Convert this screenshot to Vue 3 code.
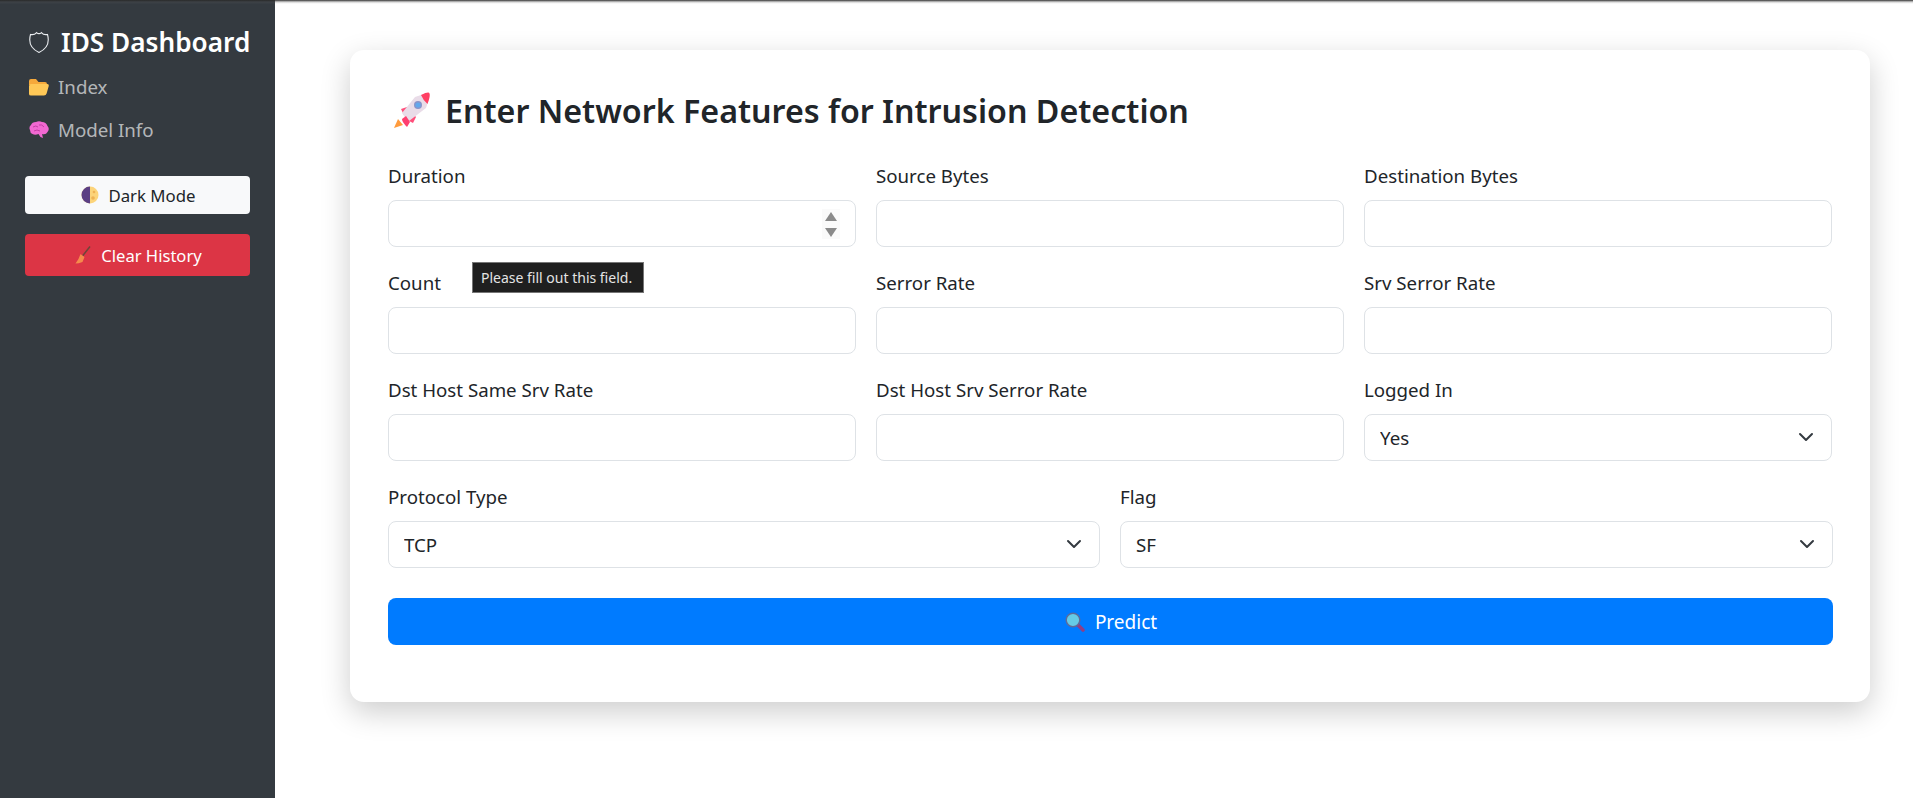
<script setup>
const triple = [
  [{ label: 'Duration', spin: true }, { label: 'Source Bytes' }, { label: 'Destination Bytes' }],
  [{ label: 'Count' }, { label: 'Serror Rate' }, { label: 'Srv Serror Rate' }],
  [{ label: 'Dst Host Same Srv Rate' }, { label: 'Dst Host Srv Serror Rate' }, { label: 'Logged In', select: ['Yes', 'No'] }]
]
const pair = [
  { label: 'Protocol Type', select: ['TCP', 'UDP', 'ICMP'] },
  { label: 'Flag', select: ['SF', 'S0', 'REJ'] }
]
</script>

<template>
  <div class="page">
    <aside class="sidebar">
      <h4 class="brand">
        <svg class="shield" viewBox="0 0 22 24" width="22" height="24"><path d="M2.5 4.5 C5 5 7 4.5 8.6 2.6 C10 4 12 4 13.4 2.6 C15 4.5 17 5 19.5 4.5 C21 10 20.8 18 11 22.4 C1.2 18 1 10 2.5 4.5 Z" fill="none" stroke="#e9ecef" stroke-width="1.1"/></svg>
        <span>IDS Dashboard</span>
      </h4>
      <a class="nav-link">
        <svg viewBox="0 0 20 18" width="20" height="18"><path d="M0 3 Q0 1 2 1 H7 L9.5 4 H16 Q18 4 18 6 V7 H0 Z" fill="#f6a93b"/><path d="M0 16 V8 Q0 6 2 6 H18 Q20.4 6 19.6 8.5 L17.6 15.5 Q17 17.500 15 17.500 H2 Q0 17.500 0 16 Z" fill="#ffc857"/></svg>
        <span>Index</span>
      </a>
      <a class="nav-link">
        <svg viewBox="0 0 20 18" width="20" height="18"><path d="M1 9 Q-.5 6 2 4 Q3 1 7 1 Q10 -.5 13 1 Q17 1 18.500 5 Q21 8 18.500 11 Q17 14 13 13 L14 17 L11.500 16 L9.500 13 Q6 14.500 3.500 13 Q1 12 1 9 Z" fill="#f268d2"/><path d="M4 6 Q7 4 9 6 M10 4 Q13 3 15 6 M5 10 Q8 8 11 10" fill="none" stroke="#c33fa5" stroke-width="1"/></svg>
        <span>Model Info</span>
      </a>
      <button class="side-btn light" type="button">
        <svg viewBox="0 0 18 18" width="18" height="18"><circle cx="9" cy="9" r="8.500" fill="#fcd47a"/><path d="M9 .5 A8.500 8.500 0 0 0 9 17.500 Z" fill="#5b3f84"/><circle cx="13" cy="6" r="1.300" fill="#eeb254"/><circle cx="12" cy="12" r="1.800" fill="#eeb254"/></svg>
        <span>Dark Mode</span>
      </button>
      <button class="side-btn danger" type="button">
        <svg viewBox="0 0 16 18" width="16" height="18"><path d="M15 .5 L7.500 10" stroke="#6e4638" stroke-width="1.500"/><path d="M5.500 8 L9.500 11 L7.500 16 Q3.500 17.500 .5 17.500 Q4 13 5.500 8 Z" fill="#f58a4c"/></svg>
        <span>Clear History</span>
      </button>
    </aside>

    <main class="content">
      <section class="card">
        <h2 class="title">
          <svg viewBox="0 0 38 38" width="38" height="38">
            <path d="M5 27 L1 36 L10 33 Z" fill="#ff9b3d"/>
            <path d="M8 17 L14 15 L23 25 L20 31 Q13 29 8 17 Z" fill="#ff4f7b"/>
            <path d="M31 2 Q37 1 36 7 L33 16 L16 29 Q11 25 9 21 L22 5 Z" fill="#e9dce8"/>
            <path d="M28 3 Q36 -1 36.500 1.500 Q37.500 4 34.500 12 Q30 8 28 3 Z" fill="#ff3f63"/>
            <circle cx="25" cy="13" r="4" fill="#8a94c8"/>
            <circle cx="25" cy="13" r="2.600" fill="#62a8ec"/>
            <path d="M13 24 L17 30 L14 35 Q9 30 9 27 Z" fill="#ff3f70"/>
          </svg>
          <span>Enter Network Features for Intrusion Detection</span>
        </h2>

        <form class="form" novalidate @submit.prevent>
          <div v-for="(row, r) in triple" :key="r" class="row three">
            <div v-for="f in row" :key="f.label" class="field">
              <label>{{ f.label }}</label>
              <div class="control">
                <select v-if="f.select">
                  <option v-for="o in f.select" :key="o">{{ o }}</option>
                </select>
                <svg v-if="f.select" class="chev" viewBox="0 0 16 16" width="16" height="16"><path d="M2 5 L8 11 L14 5" fill="none" stroke="#343a40" stroke-width="2" stroke-linecap="round" stroke-linejoin="round"/></svg>
                <input v-else type="text" />
                <div v-if="f.spin" class="spin">
                  <span class="up"></span>
                  <span class="down"></span>
                </div>
                <div v-if="f.label === 'Count'" class="tooltip">Please fill out this field.</div>
              </div>
            </div>
          </div>
          <div class="row two">
            <div v-for="f in pair" :key="f.label" class="field">
              <label>{{ f.label }}</label>
              <div class="control">
                <select>
                  <option v-for="o in f.select" :key="o">{{ o }}</option>
                </select>
                <svg class="chev" viewBox="0 0 16 16" width="16" height="16"><path d="M2 5 L8 11 L14 5" fill="none" stroke="#343a40" stroke-width="2" stroke-linecap="round" stroke-linejoin="round"/></svg>
              </div>
            </div>
          </div>
          <button class="predict" type="submit">
            <svg viewBox="0 0 20 20" width="20" height="20"><path d="M12.500 12.500 L18 18" stroke="#8f3f86" stroke-width="3.600" stroke-linecap="round"/><circle cx="8" cy="8" r="6.800" fill="#66cbe6" stroke="#5f6a99" stroke-width="1.400"/></svg>
            <span>Predict</span>
          </button>
        </form>
      </section>
    </main>
    <div class="top-shade"></div>
  </div>
</template>

<style>
html, body { margin: 0; background: #fff; }
</style>

<style scoped>
.page {
  position: relative;
  display: flex;
  height: 798px;
  overflow: hidden;
  font-family: "Noto Sans", "Open Sans", sans-serif;
  color: #212529;
}
svg { flex: none; }
.top-shade {
  position: absolute;
  left: 0; right: 0; top: 0;
  height: 4px;
  background: linear-gradient(rgba(40,40,40,.95), rgba(60,60,60,.45) 35%, rgba(120,120,120,.12) 70%, transparent);
}
.sidebar {
  width: 275px;
  flex: none;
  box-sizing: border-box;
  background: #343a40;
  padding: 24px 25px 0;
  display: flex;
  flex-direction: column;
}
.brand {
  margin: 0 0 5px;
  display: flex;
  align-items: center;
  gap: 11px;
  color: #fff;
  font-size: 26.2px;
  font-weight: 600;
  line-height: 36px;
  white-space: nowrap;
  padding-left: 3px;
}
.nav-link {
  display: flex;
  align-items: center;
  gap: 9px;
  height: 43px;
  padding-left: 4px;
  color: rgba(255,255,255,.65);
  font-size: 18.7px;
}
.side-btn {
  width: 225px;
  border: 0;
  border-radius: 4px;
  display: flex;
  align-items: center;
  justify-content: center;
  font: inherit;
  padding: 0;
}
.side-btn.light { background: #f8f9fa; color: #212529; height: 38px; margin-top: 25px; gap: 9px; font-size: 16.8px; padding-left: 2px; }
.side-btn.danger { background: #dc3545; color: #fff; height: 42px; margin-top: 20px; gap: 10px; font-size: 16.6px; padding-left: 2px; }
.content {
  flex: 1;
  min-width: 0;
  padding: 50px 43px 0 75px;
}
.card {
  box-sizing: border-box;
  height: 652px;
  background: #fff;
  border-radius: 14px;
  padding: 38px;
  box-shadow: 0 10px 30px rgba(0,0,0,.2);
}
.title {
  margin: 0 0 26px;
  display: flex;
  align-items: center;
  gap: 14px;
  font-size: 32.2px;
  font-weight: 600;
  line-height: 46px;
  height: 46px;
  padding-left: 5px;
  white-space: nowrap;
}
.form { display: flex; flex-direction: column; }
.row { display: grid; gap: 20px; }
.three { grid-template-columns: repeat(3, 1fr); margin-bottom: 20px; }
.two { grid-template-columns: 712px 1fr; margin-right: -1px; }
.field { display: flex; flex-direction: column; }
label {
  font-size: 18.7px;
  line-height: 27px;
  padding-top: 2px;
  margin-bottom: 11px;
  color: #212529;
}
.control { position: relative; }
input, select {
  display: block;
  width: 100%;
  box-sizing: border-box;
  height: 47px;
  border: 1px solid #dee2e6;
  border-radius: 8px;
  background: #fff;
  padding: 0 15px;
  font: inherit;
  font-size: 18.7px;
  color: #212529;
  appearance: none;
  outline: none;
}
.chev { position: absolute; right: 18px; top: 15px; pointer-events: none; }
.spin {
  position: absolute;
  right: 16px;
  top: 9px;
  width: 18px;
  height: 30px;
  background: #fafafa;
  display: flex;
  flex-direction: column;
  align-items: center;
  justify-content: center;
  gap: 7px;
}
.up, .down {
  width: 0; height: 0;
  border-left: 6px solid transparent;
  border-right: 6px solid transparent;
}
.up { border-bottom: 9px solid #8a8a8a; }
.down { border-top: 9px solid #8a8a8a; }
.tooltip {
  position: absolute;
  left: 84px;
  top: -45px;
  background: #1f1f1f;
  border: 1px solid #767676;
  color: #e4e4e4;
  font-size: 14px;
  line-height: 29px;
  padding: 0 11px 0 8px;
  white-space: nowrap;
}
.predict {
  margin-top: 30px;
  margin-right: -1px;
  padding: 0 0 0 1px;
  height: 47px;
  border: 0;
  border-radius: 8px;
  background: #007bff;
  color: #fff;
  font: inherit;
  font-size: 19px;
  display: flex;
  align-items: center;
  justify-content: center;
  gap: 10px;
}
</style>
